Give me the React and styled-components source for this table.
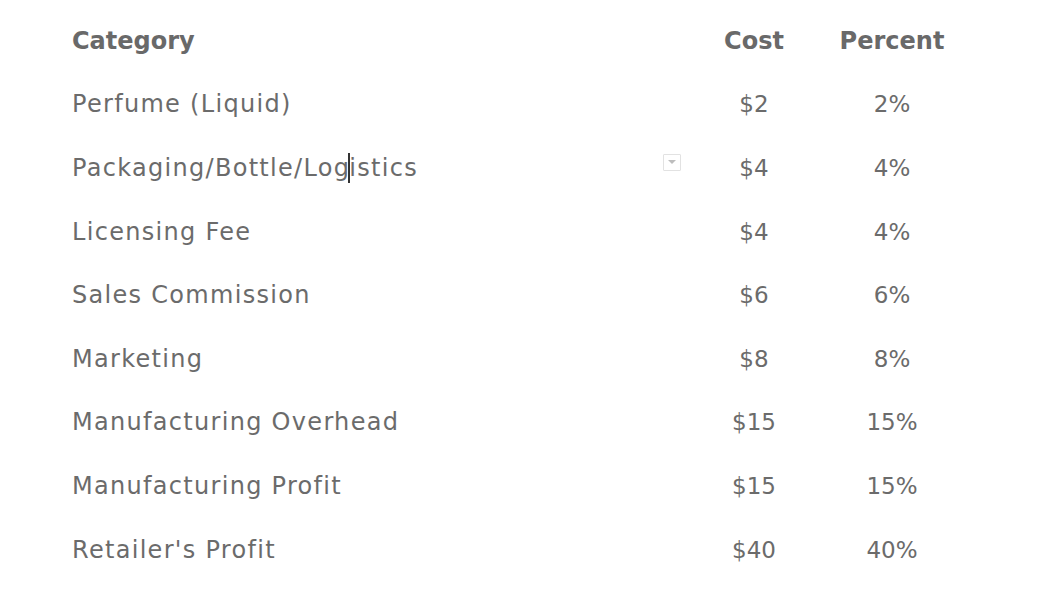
import styled, { createGlobalStyle } from 'styled-components';

const GlobalStyle = createGlobalStyle`
  body {
    margin: 0;
    background: #fff;
    font-family: "DejaVu Sans", "Open Sans", sans-serif;
  }
`;

const rows = [
  { name: 'Perfume (Liquid)', cost: '$2', pct: '2%' },
  { name: 'Packaging/Bottle/Logistics', cost: '$4', pct: '4%', active: true },
  { name: 'Licensing Fee', cost: '$4', pct: '4%' },
  { name: 'Sales Commission', cost: '$6', pct: '6%' },
  { name: 'Marketing', cost: '$8', pct: '8%' },
  { name: 'Manufacturing Overhead', cost: '$15', pct: '15%' },
  { name: 'Manufacturing Profit', cost: '$15', pct: '15%' },
  { name: "Retailer's Profit", cost: '$40', pct: '40%' },
];

const App = () => {
  return (
    <>
      <GlobalStyle />
      <Table>
        <Head>Category</Head>
        <Head $center>Cost</Head>
        <Head $center>Percent</Head>
        {rows.map((r) => (
          <Row key={r.name}>
            <NameCell>
              {r.active ? (
                <>
                  Packaging/Bottle/Log<Caret />istics
                </>
              ) : (
                r.name
              )}
              {r.active && <Dropdown />}
            </NameCell>
            <NumCell>{r.cost}</NumCell>
            <NumCell>{r.pct}</NumCell>
          </Row>
        ))}
      </Table>
    </>
  );
};

const Table = styled.div`
  display: grid;
  grid-template-columns: 620px 124px 152px;
  grid-auto-rows: 63.6px;
  padding: 9px 0 0 72px;
  color: #6b6b6b;
`;

const Head = styled.div`
  display: flex;
  align-items: center;
  justify-content: ${(p) => (p.$center ? 'center' : 'flex-start')};
  font-size: 24px;
  font-weight: 700;
  color: #696969;
`;

const Row = styled.div`
  display: contents;
`;

const NameCell = styled.div`
  position: relative;
  display: flex;
  align-items: center;
  font-size: 24px;
  letter-spacing: 1.3px;
  white-space: nowrap;
`;

const NumCell = styled.div`
  display: flex;
  align-items: center;
  justify-content: center;
  font-size: 23px;
`;

const Caret = styled.span`
  display: inline-block;
  width: 2px;
  height: 30px;
  background: #333;
  margin: 0 -1px 0 -2px;
`;

const Dropdown = styled.span`
  position: absolute;
  right: 11px;
  top: 18px;
  width: 16px;
  height: 15px;
  border: 1px solid #e2e2e2;
  border-radius: 1px;
  &::after {
    content: '';
    position: absolute;
    left: 4px;
    top: 5px;
    border-left: 4px solid transparent;
    border-right: 4px solid transparent;
    border-top: 4px solid #bdbdbd;
  }
`;

export default App;
